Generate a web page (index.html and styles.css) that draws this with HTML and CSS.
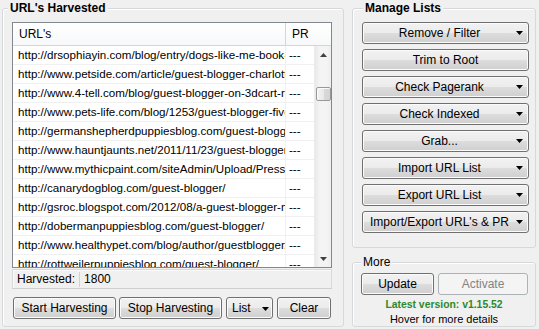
FILE: index.html
```html
<!DOCTYPE html>
<html>
<head>
<meta charset="utf-8">
<title>URL Harvester</title>
<link rel="stylesheet" href="styles.css">
</head>
<body>
<div class="app">
  <section class="group harvest">
    <span class="gtitle bold t-harvest">URL's Harvested</span>
    <div class="listview">
      <div class="lv-head">
        <div class="h-url">URL's</div>
        <div class="h-pr">PR</div>
      </div>
      <div class="lv-body">
        <div class="rows">
          <div class="row"><span class="c-url">http://drsophiayin.com/blog/entry/dogs-like-me-book-review/</span><span class="c-pr">---</span></div>
          <div class="row"><span class="c-url">http://www.petside.com/article/guest-blogger-charlotte-reed</span><span class="c-pr">---</span></div>
          <div class="row"><span class="c-url">http://www.4-tell.com/blog/guest-blogger-on-3dcart-review/</span><span class="c-pr">---</span></div>
          <div class="row"><span class="c-url">http://www.pets-life.com/blog/1253/guest-blogger-five-tips/</span><span class="c-pr">---</span></div>
          <div class="row"><span class="c-url">http://germanshepherdpuppiesblog.com/guest-blogger/</span><span class="c-pr">---</span></div>
          <div class="row"><span class="c-url">http://www.hauntjaunts.net/2011/11/23/guest-blogger-ghost/</span><span class="c-pr">---</span></div>
          <div class="row"><span class="c-url">http://www.mythicpaint.com/siteAdmin/Upload/Press/guest.pdf</span><span class="c-pr">---</span></div>
          <div class="row"><span class="c-url">http://canarydogblog.com/guest-blogger/</span><span class="c-pr">---</span></div>
          <div class="row"><span class="c-url">http://gsroc.blogspot.com/2012/08/a-guest-blogger-meet.html</span><span class="c-pr">---</span></div>
          <div class="row"><span class="c-url">http://dobermanpuppiesblog.com/guest-blogger/</span><span class="c-pr">---</span></div>
          <div class="row"><span class="c-url">http://www.healthypet.com/blog/author/guestblogger/</span><span class="c-pr">---</span></div>
          <div class="row"><span class="c-url">http://rottweilerpuppiesblog.com/guest-blogger/</span><span class="c-pr">---</span></div>
        </div>
        <div class="vscroll">
          <span class="sb-btn"><svg width="7" height="4" viewBox="0 0 7 4"><polygon points="0,4 7,4 3.5,0" fill="#404040"/></svg></span>
          <span class="thumb"></span>
          <span class="sb-btn sb-down"><svg width="7" height="4" viewBox="0 0 7 4"><polygon points="0,0 7,0 3.5,4" fill="#404040"/></svg></span>
        </div>
      </div>
    </div>
    <div class="status"><span class="lbl">Harvested:</span><span class="val">1800</span></div>
    <div class="btnrow">
      <button class="btn w-start">Start Harvesting</button>
      <button class="btn w-stop">Stop Harvesting</button>
      <button class="btn w-list"><span>List</span><svg class="dd" width="7" height="4" viewBox="0 0 7 4"><polygon points="0,0 7,0 3.5,4" fill="#000"/></svg></button>
      <button class="btn w-clear">Clear</button>
    </div>
  </section>

  <div class="right">
    <section class="group manage">
      <span class="gtitle bold t-manage">Manage Lists</span>
      <button class="btn mbtn"><span class="lab">Remove / Filter</span><svg class="dd" width="7" height="4" viewBox="0 0 7 4"><polygon points="0,0 7,0 3.5,4" fill="#000"/></svg></button>
      <button class="btn mbtn nodd"><span class="lab">Trim to Root</span></button>
      <button class="btn mbtn"><span class="lab">Check Pagerank</span><svg class="dd" width="7" height="4" viewBox="0 0 7 4"><polygon points="0,0 7,0 3.5,4" fill="#000"/></svg></button>
      <button class="btn mbtn"><span class="lab">Check Indexed</span><svg class="dd" width="7" height="4" viewBox="0 0 7 4"><polygon points="0,0 7,0 3.5,4" fill="#000"/></svg></button>
      <button class="btn mbtn"><span class="lab">Grab...</span><svg class="dd" width="7" height="4" viewBox="0 0 7 4"><polygon points="0,0 7,0 3.5,4" fill="#000"/></svg></button>
      <button class="btn mbtn"><span class="lab">Import URL List</span><svg class="dd" width="7" height="4" viewBox="0 0 7 4"><polygon points="0,0 7,0 3.5,4" fill="#000"/></svg></button>
      <button class="btn mbtn"><span class="lab">Export URL List</span><svg class="dd" width="7" height="4" viewBox="0 0 7 4"><polygon points="0,0 7,0 3.5,4" fill="#000"/></svg></button>
      <button class="btn mbtn"><span class="lab">Import/Export URL's &amp; PR</span><svg class="dd" width="7" height="4" viewBox="0 0 7 4"><polygon points="0,0 7,0 3.5,4" fill="#000"/></svg></button>
    </section>
    <section class="group more">
      <span class="gtitle t-more">More</span>
      <div class="more-btns">
        <button class="btn w-update">Update</button>
        <button class="btn w-activate" disabled>Activate</button>
      </div>
      <div class="latest">Latest version: v1.15.52</div>
      <div class="hover">Hover for more details</div>
    </section>
  </div>
</div>
</body>
</html>
```

FILE: styles.css
```css
* { box-sizing: border-box; }
html, body { margin: 0; padding: 0; }
body {
  background: #f0f0f0;
  font-family: "Liberation Sans", Arial, sans-serif;
  font-size: 12px;
  color: #000;
  width: 539px;
  height: 329px;
  overflow: hidden;
}
.app {
  display: flex;
  padding: 8px 0 0 2px;
}
.group {
  position: relative;
  border: 1px solid #d5d9dc;
  border-radius: 3px;
  box-shadow: inset 1px 1px 0 #fff;
}
.gtitle {
  position: absolute;
  top: -8px;
  line-height: 14px;
  padding: 0 2px;
  background: #f0f0f0;
  white-space: nowrap;
}
.bold { font-weight: bold; }
.t-harvest { left: 5px; }
.t-manage { left: 10px; }
.t-more { left: 8px; }

/* Left group */
.harvest {
  width: 342px;
  height: 319px;
  padding: 13px 11px 0 9px;
  display: flex;
  flex-direction: column;
}
.listview {
  width: 320px;
  height: 246px;
  border: 1px solid #828790;
  background: #fff;
  display: flex;
  flex-direction: column;
  overflow: hidden;
}
.lv-head {
  height: 23px;
  flex: none;
  display: flex;
  background: linear-gradient(#ffffff, #f7f8f9);
  border-bottom: 1px solid #d5d5d5;
  line-height: 22px;
  font-size: 12px;
}
.h-url {
  width: 273px;
  padding-left: 6px;
  border-right: 1px solid #d5d5d5;
}
.h-pr {
  flex: 1;
  padding-left: 6px;
}
.lv-body {
  flex: 1;
  display: flex;
  min-height: 0;
}
.rows {
  width: 301px;
  overflow: hidden;
}
.row {
  display: flex;
  height: 19px;
  border-bottom: 1px solid #f0f0f0;
  font-size: 11.6px;
  line-height: 18px;
}
.c-url {
  width: 273px;
  flex: none;
  padding-left: 5px;
  padding-right: 2px;
  white-space: nowrap;
  overflow: hidden;
  border-right: 1px solid #f0f0f0;
}
.c-pr {
  flex: 1;
  padding-left: 3px;
}
.vscroll {
  width: 17px;
  flex: none;
  display: flex;
  flex-direction: column;
  align-items: center;
  background: linear-gradient(to right, #e9e9e9, #f4f4f4 30%, #f4f4f4 70%, #eeeeee);
  border-left: 1px solid #ececec;
}
.sb-btn {
  height: 17px;
  width: 100%;
  display: flex;
  align-items: center;
  justify-content: center;
  flex: none;
}
.sb-btn svg { display: block; }
.sb-down { margin-top: auto; }
.thumb {
  margin-top: 24px;
  width: 15px;
  height: 14px;
  border: 1px solid #989898;
  border-radius: 2px;
  background: linear-gradient(to right, #f3f3f3, #e9e9e9 50%, #d9d9d9 51%, #d4d4d4);
  box-shadow: inset 1px 1px 0 #fbfbfb;
}
.status {
  margin-top: 1px;
  width: 320px;
  height: 20px;
  display: flex;
  align-items: center;
  border: 1px solid #d9d9d9;
  border-bottom-color: #cfcfcf;
  box-shadow: inset 1px 1px 0 #fbfbfb;
}
.status .lbl {
  padding: 0 4px 0 4px;
  border-right: 1px solid #d2d2d2;
  line-height: 15px;
}
.status .val { padding-left: 4px; }
.btnrow {
  display: flex;
  margin-top: 8px;
  padding-left: 1px;
}

/* Buttons */
.btn {
  height: 22px;
  border: 1px solid #707070;
  border-radius: 3px;
  background: linear-gradient(#f2f2f2 0%, #ebebeb 50%, #dddddd 50%, #cfcfcf 100%);
  box-shadow: inset 0 0 0 1px #fbfbfb;
  font-family: "Liberation Sans", Arial, sans-serif;
  font-size: 12px;
  color: #000;
  padding: 0;
  margin: 0;
  display: flex;
  align-items: center;
  justify-content: center;
  white-space: nowrap;
}
.btn:disabled {
  border-color: #adb2b5;
  background: #f4f4f4;
  box-shadow: none;
  color: #838383;
}
.dd { display: block; flex: none; }
.w-start { width: 103px; }
.w-stop { width: 103px; margin-left: 3px; }
.w-list { width: 47px; margin-left: 4px; justify-content: flex-start; padding-left: 5px; }
.w-list .dd { margin-left: 11px; margin-top: 1px; }
.w-clear { width: 54px; margin-left: 4px; }

/* Right column */
.right {
  margin-left: 8px;
  display: flex;
  flex-direction: column;
}
.manage {
  width: 184px;
  height: 240px;
  padding: 13px 6px 0 9px;
  display: flex;
  flex-direction: column;
  gap: 5px;
}
.mbtn {
  width: 167px;
  flex: none;
  padding-right: 5px;
}
.mbtn.nodd { padding-right: 0; }
.mbtn .lab { flex: 1; text-align: center; }
.more {
  margin-top: 14px;
  width: 184px;
  height: 65px;
  padding: 10px 6px 0 8px;
}
.more-btns { display: flex; }
.w-update { width: 73px; }
.w-activate { width: 90px; margin-left: 4px; }
.latest {
  margin-top: 3px;
  text-align: center;
  font-weight: bold;
  font-size: 10.4px;
  line-height: 14px;
  color: #2b8a2b;
  padding-right: 2px;
}
.hover {
  text-align: center;
  font-size: 11px;
  line-height: 14px;
  padding-right: 2px;
}
```
